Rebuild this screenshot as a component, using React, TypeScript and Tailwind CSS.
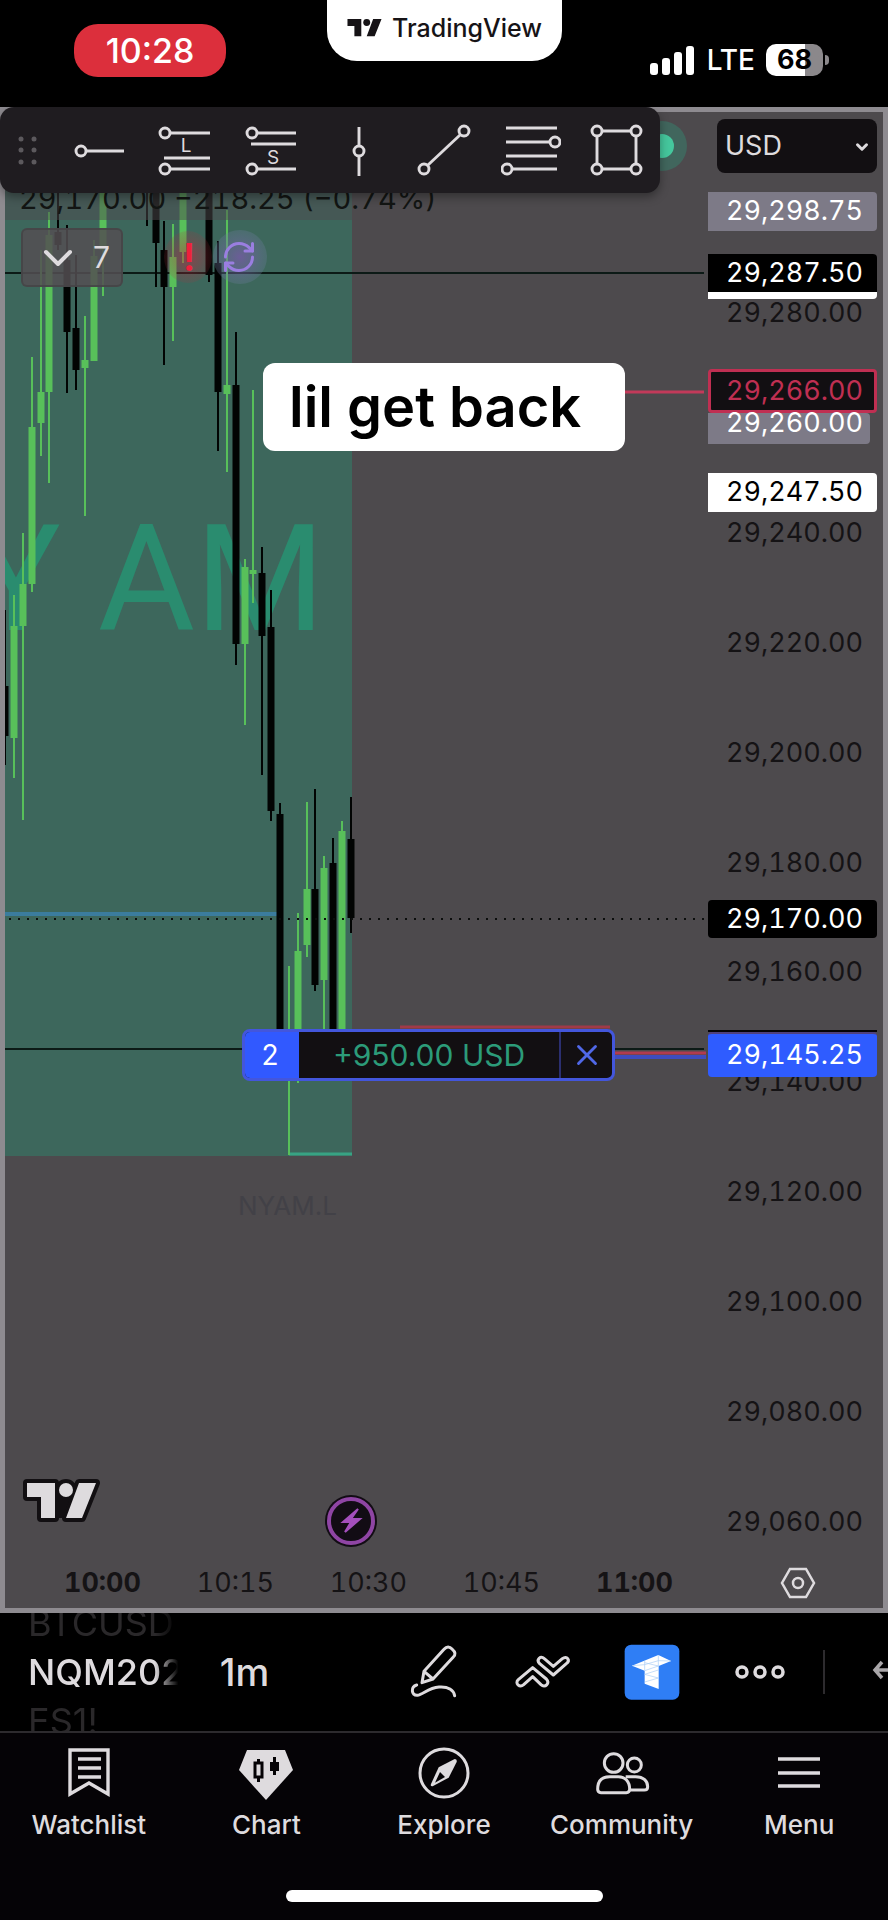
import { useState } from 'react';
import { ChevronDown, RefreshCw, X } from 'lucide-react';

interface Candle {
  x: number;
  high: number;
  low: number;
  top: number;
  bottom: number;
  up?: boolean;
}

const CANDLES: Candle[] = [
  { x: 5, high: 610, low: 765, top: 686, bottom: 736 },
  { x: 14, high: 595, low: 778, top: 626, bottom: 738, up: true },
  { x: 23, high: 533, low: 820, top: 584, bottom: 626, up: true },
  { x: 32, high: 357, low: 592, top: 427, bottom: 584, up: true },
  { x: 41, high: 250, low: 456, top: 392, bottom: 423, up: true },
  { x: 49, high: 212, low: 483, top: 235, bottom: 392, up: true },
  { x: 58, high: 150, low: 250, top: 232, bottom: 245 },
  { x: 67, high: 225, low: 393, top: 260, bottom: 332 },
  { x: 76, high: 255, low: 390, top: 328, bottom: 370 },
  { x: 85, high: 316, low: 516, top: 360, bottom: 368, up: true },
  { x: 94, high: 240, low: 360, top: 256, bottom: 361, up: true },
  { x: 103, high: 150, low: 296, top: 150, bottom: 250, up: true },
  { x: 147, high: 150, low: 226, top: 150, bottom: 180 },
  { x: 156, high: 150, low: 287, top: 150, bottom: 243 },
  { x: 164, high: 221, low: 365, top: 250, bottom: 287 },
  { x: 173, high: 224, low: 341, top: 257, bottom: 287, up: true },
  { x: 183, high: 150, low: 263, top: 150, bottom: 252, up: true },
  { x: 209, high: 150, low: 282, top: 192, bottom: 275 },
  { x: 218, high: 241, low: 451, top: 263, bottom: 392 },
  { x: 227, high: 210, low: 472, top: 385, bottom: 394, up: true },
  { x: 236, high: 332, low: 665, top: 385, bottom: 644 },
  { x: 245, high: 559, low: 725, top: 567, bottom: 644, up: true },
  { x: 253, high: 390, low: 603, top: 570, bottom: 574, up: true },
  { x: 262, high: 547, low: 775, top: 573, bottom: 636 },
  { x: 271, high: 590, low: 821, top: 627, bottom: 811 },
  { x: 280, high: 803, low: 1040, top: 814, bottom: 1034 },
  { x: 289, high: 966, low: 1155, top: 1034, bottom: 1050, up: true },
  { x: 298, high: 913, low: 1083, top: 951, bottom: 1040, up: true },
  { x: 307, high: 802, low: 957, top: 889, bottom: 945, up: true },
  { x: 315, high: 789, low: 991, top: 889, bottom: 985 },
  { x: 324, high: 856, low: 1040, top: 868, bottom: 980, up: true },
  { x: 333, high: 838, low: 1040, top: 863, bottom: 1040 },
  { x: 342, high: 821, low: 1040, top: 831, bottom: 1040, up: true },
  { x: 351, high: 797, low: 933, top: 839, bottom: 918 },
];

interface AxisTag {
  price: number;
  y: number;
  className: string;
}

const TICKS = [29280, 29240, 29220, 29200, 29180, 29160, 29140, 29120, 29100, 29080, 29060];

const TAGS: AxisTag[] = [
  { price: 29298.75, y: 80, className: 'h-[39px] w-[169px] rounded-r bg-[#7d7a87] pr-[14px] text-white' },
  { price: 29287.5, y: 142, className: 'h-[45px] w-[169px] rounded-r border-b-[7px] border-white bg-black pr-[14px] text-white' },
  { price: 29266, y: 257, className: 'h-[44px] w-[169px] rounded-sm border-[3px] border-[#c02f52] bg-[#120f12] pr-[11px] text-[#c02f52]' },
  { price: 29260, y: 301, className: 'h-[31px] w-[162px] rounded-r bg-[#7d7a87] pr-[7px] pb-[10px] text-white' },
  { price: 29247.5, y: 361, className: 'h-[39px] w-[169px] rounded-r bg-white pr-[14px] text-black' },
  { price: 29170, y: 788, className: 'h-[38px] w-[169px] rounded bg-black pr-[14px] text-white' },
  { price: 29145.25, y: 920, className: 'h-[45px] w-[169px] rounded border-t-2 border-[#50407c] bg-[#2f5cff] pr-[14px] text-white' },
];

const TIMES = [
  { label: '10:00', major: true },
  { label: '10:15' },
  { label: '10:30' },
  { label: '10:45' },
  { label: '11:00', major: true },
];

const formatPrice = (value: number) =>
  value.toLocaleString('en-US', { minimumFractionDigits: 2, maximumFractionDigits: 2 });

// Distance in pixels from the top of the pane to a price level
const priceToY = (price: number) => Math.round(201 + (29280 - price) * 5.495);

const DRAW_TOOLS = [
  {
    name: 'Horizontal ray',
    icon: (
      <>
        <path d="M15 31H53" />
        <circle cx="10" cy="31" r="5" />
      </>
    ),
  },
  {
    name: 'Long position',
    icon: (
      <>
        <path d="M13 13H53M7 38H53M13 49H53" />
        <circle cx="8" cy="13" r="5" />
        <circle cx="8" cy="49" r="5" />
        <text x="29" y="32" textAnchor="middle" fontSize="19" fill="currentColor" stroke="none">L</text>
      </>
    ),
  },
  {
    name: 'Short position',
    icon: (
      <>
        <path d="M14 13H53M8 24H53M14 49H53" />
        <circle cx="9" cy="13" r="5" />
        <circle cx="9" cy="49" r="5" />
        <text x="30" y="44" textAnchor="middle" fontSize="19" fill="currentColor" stroke="none">S</text>
      </>
    ),
  },
  {
    name: 'Vertical line',
    icon: (
      <>
        <path d="M30 7V26M30 36V56" />
        <circle cx="30" cy="31" r="5" />
      </>
    ),
  },
  {
    name: 'Trend line',
    icon: (
      <>
        <path d="M13 45L45 15" />
        <circle cx="9" cy="49" r="5" />
        <circle cx="49" cy="11" r="5" />
      </>
    ),
  },
  {
    name: 'Fib retracement',
    icon: (
      <>
        <path d="M5 8H56M5 22H49M5 36H56M11 49H56" />
        <circle cx="54" cy="22" r="5" />
        <circle cx="6" cy="49" r="5" />
      </>
    ),
  },
  {
    name: 'Rectangle',
    icon: (
      <>
        <path d="M15 11H44M15 49H44M10 16V44M49 16V44" />
        <circle cx="10" cy="11" r="5" />
        <circle cx="49" cy="11" r="5" />
        <circle cx="10" cy="49" r="5" />
        <circle cx="49" cy="49" r="5" />
      </>
    ),
  },
];

function TvLogo({ className }: { className?: string }) {
  return (
    <svg viewBox="0 0 77 43" className={className} fill="currentColor" aria-hidden="true">
      <path d="M3 4H31V39H17V18H3ZM55 4H72L58 39H42Z" />
      <circle cx="42" cy="11" r="7" />
    </svg>
  );
}

function StatusBar() {
  return (
    <header className="grid h-[107px] grid-cols-3 items-start bg-black text-white">
      <div className="mt-[24px] ml-[74px] flex h-[53px] w-[152px] items-center justify-center rounded-[24px] bg-[#dc2f3c] text-[34px] font-medium">
        10:28
      </div>
      <div className="flex h-[61px] w-[235px] items-start justify-center gap-[8px] justify-self-center rounded-b-[30px] bg-white pt-[12px] text-[25px] leading-[32px] font-medium text-[#161316]">
        <TvLogo className="mt-[5px] w-[38px]" />
        TradingView
      </div>
      <div className="mt-[43px] mr-[59px] flex h-[34px] items-center justify-self-end">
        <svg viewBox="0 0 45 30" className="mr-[12px] h-[30px] w-[45px]" fill="currentColor" aria-hidden="true">
          <rect x="0" y="18" width="8" height="12" rx="3" />
          <rect x="12" y="13" width="8" height="17" rx="3" />
          <rect x="24" y="7" width="8" height="23" rx="3" />
          <rect x="36" y="1" width="8" height="29" rx="3" />
        </svg>
        <span className="mr-[11px] text-[28px] font-medium">LTE</span>
        <span className="flex h-[32px] w-[57px] items-center justify-center rounded-[10px] bg-linear-to-r from-white from-68% to-[#8b888b] to-68% text-[27px] font-bold text-black">
          68
        </span>
        <span className="ml-[2px] h-[10px] w-[4px] rounded-r bg-[#8b888b]" />
      </div>
    </header>
  );
}

function DrawingToolbar() {
  return (
    <div className="absolute -top-[5px] -left-[5px] flex h-[86px] items-center rounded-[14px] bg-[#1f1c20] pl-[17px] text-[#dedbde] shadow-[0_4px_10px_rgba(0,0,0,0.35)]">
      <svg viewBox="0 0 24 40" className="mr-[17px] h-[40px] w-[24px]" fill="#5c595d" aria-hidden="true">
        {[9, 20, 32].map(y => (
          <g key={y}>
            <circle cx="4" cy={y} r="2.5" />
            <circle cx="17" cy={y} r="2.5" />
          </g>
        ))}
      </svg>
      {DRAW_TOOLS.map(tool => (
        <button key={tool.name} type="button" aria-label={tool.name} className="flex w-[86px] justify-center">
          <svg viewBox="0 0 60 60" className="h-[60px] w-[60px]" fill="none" stroke="currentColor" strokeWidth="2.9">
            {tool.icon}
          </svg>
        </button>
      ))}
    </div>
  );
}

function ChartDrawing() {
  return (
    <svg
      viewBox="5 112 878 1446"
      preserveAspectRatio="xMinYMin meet"
      className="absolute inset-0 h-full w-full"
      aria-hidden="true"
    >
      <defs>
        <radialGradient id="redGlow">
          <stop offset="0" stopColor="#d0203c" stopOpacity="0.5" />
          <stop offset="1" stopColor="#b0303c" stopOpacity="0.15" />
        </radialGradient>
        <radialGradient id="purpleGlow">
          <stop offset="0" stopColor="#8458b8" stopOpacity="0.65" />
          <stop offset="1" stopColor="#6c7c9c" stopOpacity="0.3" />
        </radialGradient>
      </defs>
      <rect x="5" y="112" width="347" height="1044" fill="#3d675c" />
      <text x="325" y="630" textAnchor="end" fontSize="149" fill="#2a8c6f" className="font-[Roboto,sans-serif]">NY AM</text>
      <path d="M5 273H704M5 1049H704" stroke="#0c1a16" strokeWidth="2" />
      <path d="M5 914H282" stroke="#3b7c9d" strokeWidth="4" />
      <path d="M289 1154H352" stroke="#38a383" strokeWidth="3" />
      {CANDLES.map(c => (
        <g key={c.x} fill={c.up ? '#58c05a' : '#020403'}>
          <rect x={c.x - 1} y={c.high} width="2" height={c.low - c.high} />
          <rect x={c.x - 3.5} y={c.top} width="7" height={c.bottom - c.top} />
        </g>
      ))}
      <rect x="5" y="112" width="450" height="108" fill="#4d4a4d" opacity="0.5" />
      <path d="M9 919H704" stroke="#0b0d0c" strokeWidth="2" strokeDasharray="2 7" />
      <path d="M352 392H704" stroke="#c23a5a" strokeWidth="3" />
      <path d="M400 1027H610" stroke="#a03a48" strokeWidth="3" />
      <path d="M612 1053H706" stroke="#b23a50" strokeWidth="3" />
      <path d="M612 1057H706" stroke="#3e4cc0" strokeWidth="4" />
      <path d="M708 1031H877" stroke="#050306" strokeWidth="2" />
      <ellipse cx="188" cy="257" rx="24" ry="26" fill="url(#redGlow)" />
      <ellipse cx="240" cy="257" rx="27" ry="27" fill="url(#purpleGlow)" />
      <circle cx="662" cy="146" r="25" fill="#41665d" />
      <circle cx="662" cy="146" r="12" fill="#45c79d" />
      <text x="238" y="1215" fontSize="26" fill="#424147">NYAM.L</text>
      <g fill="#120f12" stroke="#120f12" strokeWidth="8" strokeLinejoin="round">
        <path d="M27 1483H55V1518H41V1497H27ZM79 1483H96L82 1518H66Z" />
        <circle cx="66" cy="1490" r="7" />
        <path d="M55 1487H79L68 1514H55Z" />
      </g>
      <path d="M27 1483H55V1518H41V1497H27ZM79 1483H96L82 1518H66Z" fill="#dedbde" />
      <circle cx="66" cy="1490" r="7" fill="#dedbde" />
      <circle cx="351" cy="1521" r="26" fill="#120c14" />
      <circle cx="351" cy="1521" r="22" fill="none" stroke="#8f45a4" strokeWidth="4" />
      <path d="M358 1509L343 1522H351L345 1532L360 1519H351Z" fill="#a44fbc" stroke="#a44fbc" strokeWidth="2" />
    </svg>
  );
}

function PriceAxis() {
  return (
    <div className="absolute inset-y-0 right-0 w-[180px] text-[27px] tabular-nums">
      <div className="absolute top-[7px] right-[6px]">
        <select
          aria-label="Currency"
          className="h-[54px] w-[160px] appearance-none rounded-lg bg-[#120f12] pl-[8px] text-[27px] text-[#dedbde]"
        >
          <option>USD</option>
        </select>
        <ChevronDown size={18} strokeWidth={4} className="pointer-events-none absolute top-[19px] right-[6px] text-[#dedbde]" />
      </div>
      {TICKS.map(price => (
        <span
          key={price}
          className="absolute right-[20px] -translate-y-1/2 leading-[32px] text-[#151315]"
          style={{ top: priceToY(price) }}
        >
          {formatPrice(price)}
        </span>
      ))}
      {TAGS.map(tag => (
        <span
          key={tag.price}
          className={`absolute left-[5px] flex items-center justify-end ${tag.className}`}
          style={{ top: tag.y }}
        >
          {formatPrice(tag.price)}
        </span>
      ))}
    </div>
  );
}

function PositionPanel() {
  return (
    <div className="absolute top-[917px] left-[237px] flex h-[52px] w-[373px] overflow-hidden rounded-[8px] border-[3px] border-[#4356dc] bg-[#120f12]">
      <span className="flex w-[54px] items-center justify-center bg-[#3159ff] pr-[4px] text-[28px] text-white">2</span>
      <span className="flex flex-1 items-center justify-center text-[30px] text-[#2c9b79]">+950.00 USD</span>
      <button
        type="button"
        aria-label="Close position"
        className="flex w-[53px] items-center justify-center border-l-2 border-[#2b2f70] text-[#5068e8]"
      >
        <X size={34} strokeWidth={2} />
      </button>
    </div>
  );
}

function TimeAxis() {
  return (
    <div className="flex h-[50px] items-center pl-[31px] text-[27px] text-[#151315] tabular-nums">
      {TIMES.map(t => (
        <span key={t.label} className={`w-[133px] text-center ${t.major ? 'font-bold' : ''}`}>
          {t.label}
        </span>
      ))}
      <button type="button" aria-label="Axis settings" className="mr-[67px] ml-auto text-[#dedbde]">
        <svg viewBox="0 0 36 32" className="h-[32px] w-[36px]" fill="none" stroke="currentColor" strokeWidth="2.5">
          <path d="M10 2H26L34 16L26 30H10L2 16Z" />
          <circle cx="18" cy="16" r="5" />
        </svg>
      </button>
    </div>
  );
}

function ChartPanel() {
  const [open, setOpen] = useState(false);

  return (
    <main className="relative flex flex-1 flex-col border-[5px] border-[#8e8b90] bg-[#4d4a4d]">
      <div className="relative flex-1">
        <ChartDrawing />
        <p className="absolute top-[70px] left-[14px] text-[29px] leading-[34px] text-[#121513] tabular-nums">
          29,170.00 −218.25 (−0.74%)
        </p>
        <button
          type="button"
          aria-expanded={open}
          onClick={() => setOpen(!open)}
          className="absolute top-[116px] left-[16px] flex h-[59px] w-[102px] items-center justify-between rounded-[6px] border-2 border-[#454346]/80 bg-[#544f52]/85 pr-[11px] pl-[11px] text-[30px] text-[#dedbde]"
        >
          <ChevronDown size={48} strokeWidth={2} />
          7
        </button>
        <span className="absolute top-[124px] left-[178px] text-[38px] leading-[42px] font-semibold text-[#f0203c]">!</span>
        <RefreshCw size={36} strokeWidth={2} className="absolute top-[127px] left-[216px] text-[#9a7ee0]" />
        <PriceAxis />
        <p className="absolute top-[251px] left-[258px] flex h-[88px] w-[362px] items-center rounded-[12px] bg-white pl-[26px] text-[56px] leading-[60px] font-semibold text-black">
          lil get back
        </p>
        <PositionPanel />
        <DrawingToolbar />
      </div>
      <TimeAxis />
    </main>
  );
}

function SymbolBar() {
  return (
    <section className="flex h-[120px] items-center border-b-2 border-[#2d2b2e] bg-black text-[#dedbde]">
      <div className="flex h-full w-[182px] flex-col justify-center overflow-hidden mask-r-from-85% mask-r-to-98% pl-[28px]">
        <span className="flex h-[49px] shrink-0 items-center text-[36px] text-[#2a282a]">BTCUSD</span>
        <span className="flex h-[49px] shrink-0 items-center text-[36px] font-medium">NQM2026</span>
        <span className="flex h-[49px] shrink-0 items-center text-[36px] text-[#2a282a]">ES1!</span>
      </div>
      <button type="button" className="ml-[8px] w-[109px] text-[38px] font-medium">1m</button>
      <div className="ml-auto flex items-center">
        <button type="button" aria-label="Draw" className="flex w-[109px] justify-center">
          <svg viewBox="9 36 180 180" className="h-[60px] w-[60px]" fill="none" stroke="currentColor" strokeWidth="9" strokeLinecap="round" strokeLinejoin="round">
            <path d="M69 124L129 58Q141 44 154 58Q168 70 157 81L96 147L63 158ZM69 124L96 147" />
            <path d="M47 165C29 170 30 197 49 196C66 194 82 173 114 171C142 169 158 180 161 197" />
          </svg>
        </button>
        <button type="button" aria-label="Indicators" className="flex w-[109px] justify-center">
          <svg viewBox="334 36 180 180" className="h-[60px] w-[60px]" fill="none" stroke="currentColor" strokeWidth="9" strokeLinejoin="round">
            <path d="M350 149L393 113L434 147C446 160 430 175 418 164L393 140L366 164C354 174 338 160 350 149Z" />
            <path d="M428 86L455 109L482 86C496 75 507 91 494 101L455 135L414 101C402 88 417 76 428 86Z" />
          </svg>
        </button>
        <button type="button" aria-label="Broker" className="flex w-[109px] justify-center">
          <svg viewBox="662 36 180 180" className="h-[60px] w-[60px]">
            <rect x="670" y="44" width="164" height="165" rx="20" fill="#2f7ef5" />
            <path d="M692 107L771 75L809 93L772 108V177L730 161V122Z" fill="#fff" />
            <path d="M730 92V122M771 75V108M692 107L730 104L771 92L809 93M730 122L771 108L730 98M730 133L771 144M771 120L730 133M730 156L771 144" fill="none" stroke="#a9cbf5" strokeWidth="2" />
          </svg>
        </button>
        <button type="button" aria-label="More" className="flex w-[109px] justify-center">
          <svg viewBox="0 0 60 60" className="h-[60px] w-[60px]" fill="none" stroke="currentColor" strokeWidth="3.5">
            <circle cx="11" cy="30" r="5" />
            <circle cx="29" cy="30" r="5" />
            <circle cx="47" cy="30" r="5" />
          </svg>
        </button>
        <span className="ml-[8px] h-[44px] w-[2px] bg-[#2d2b2e]" />
        <button type="button" aria-label="Undo" className="ml-[46px] text-[#a9a6a9]">
          <svg viewBox="0 0 17 24" className="h-[24px] w-[17px]" fill="none" stroke="currentColor" strokeWidth="3.5">
            <path d="M11 2L4 10L11 18M4 10H17" />
          </svg>
        </button>
      </div>
    </section>
  );
}

const NAV_ITEMS = [
  {
    label: 'Watchlist',
    viewBox: '0 0 60 60',
    icon: <path d="M11 7H49V51L30 40L11 51ZM19 16H42M19 25H42M19 34H42" strokeWidth="3.4" />,
  },
  {
    label: 'Chart',
    viewBox: '0 0 60 60',
    icon: (
      <>
        <path d="M11 7H49L57 27L30 57L3 27Z" fill="currentColor" stroke="none" />
        <path d="M19 20H26V34H19ZM22.5 16V20M22.5 34V39" stroke="#050306" strokeWidth="3" />
        <path d="M38.5 14V32M34 23H43" stroke="#050306" strokeWidth="3" />
        <path d="M34 19H43V28H34Z" fill="#050306" stroke="none" />
      </>
    ),
  },
  {
    label: 'Explore',
    viewBox: '42 339 180 180',
    icon: (
      <>
        <circle cx="132" cy="429" r="72" strokeWidth="9" />
        <path d="M116 412L164 387Q172 387 170 396L146 443L98 469Q90 470 93 462Z" fill="currentColor" stroke="none" />
        <path d="M120 426L135 441L105 458Z" fill="#050306" stroke="none" />
      </>
    ),
  },
  {
    label: 'Community',
    viewBox: '575 339 180 180',
    icon: (
      <g strokeWidth="9">
        <circle cx="640" cy="399" r="28" />
        <circle cx="702" cy="405" r="21" />
        <path d="M592 478C592 452 606 440 628 440H654C674 440 688 454 688 478Q688 488 678 488H602Q592 488 592 478Z" />
        <path d="M676 440H706C730 440 742 454 742 470Q742 480 732 480H688" />
      </g>
    ),
  },
  {
    label: 'Menu',
    viewBox: '0 0 60 60',
    icon: <path d="M9 16H51M9 30H51M9 43H51" strokeWidth="3.4" />,
  },
];

function BottomNav() {
  return (
    <footer className="flex h-[187px] flex-col justify-between bg-[#050306] pt-[10px] pb-[18px] text-[#dedbde]">
      <nav className="grid grid-cols-5">
        {NAV_ITEMS.map(item => (
          <a key={item.label} href="#" className="flex flex-col items-center gap-[7px] text-[26px] leading-[30px] font-medium">
            <svg viewBox={item.viewBox} className="h-[60px] w-[60px]" fill="none" stroke="currentColor">
              {item.icon}
            </svg>
            {item.label}
          </a>
        ))}
      </nav>
      <span className="h-[12px] w-[317px] self-center rounded-full bg-white" />
    </footer>
  );
}

export default function App() {
  return (
    <div className="flex min-h-screen flex-col overflow-hidden bg-black font-[Inter,sans-serif]">
      <StatusBar />
      <ChartPanel />
      <SymbolBar />
      <BottomNav />
    </div>
  );
}
